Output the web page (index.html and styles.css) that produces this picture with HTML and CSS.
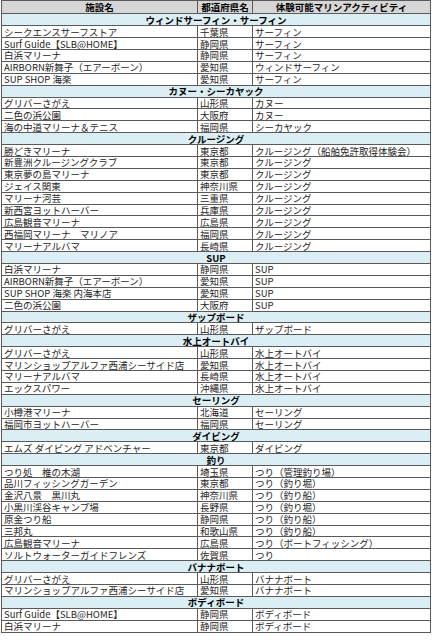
FILE: index.html
```html
<!DOCTYPE html>
<html lang="ja">
<head>
<meta charset="utf-8">
<link rel="stylesheet" href="styles.css">
</head>
<body>
<table class="list">
<colgroup><col class="c1"><col class="c2"><col class="c3"></colgroup>
<thead>
<tr class="head"><th>施設名</th><th>都道府県名</th><th>体験可能マリンアクティビティ</th></tr>
</thead>
<tbody>
<tr class="sec"><td colspan="3">ウィンドサーフィン・サーフィン</td></tr>
<tr><td>シークエンスサーフストア</td><td>千葉県</td><td>サーフィン</td></tr>
<tr><td>Surf Guide【SLB@HOME】</td><td>静岡県</td><td>サーフィン</td></tr>
<tr><td>白浜マリーナ</td><td>静岡県</td><td>サーフィン</td></tr>
<tr><td>AIRBORN新舞子（エアーボーン）</td><td>愛知県</td><td>ウィンドサーフィン</td></tr>
<tr><td>SUP SHOP 海楽</td><td>愛知県</td><td>サーフィン</td></tr>
<tr class="sec"><td colspan="3">カヌー・シーカヤック</td></tr>
<tr><td>グリバーさがえ</td><td>山形県</td><td>カヌー</td></tr>
<tr><td>二色の浜公園</td><td>大阪府</td><td>カヌー</td></tr>
<tr><td>海の中道マリーナ＆テニス</td><td>福岡県</td><td>シーカヤック</td></tr>
<tr class="sec"><td colspan="3">クルージング</td></tr>
<tr><td>勝どきマリーナ</td><td>東京都</td><td>クルージング（船舶免許取得体験会）</td></tr>
<tr><td>新豊洲クルージングクラブ</td><td>東京都</td><td>クルージング</td></tr>
<tr><td>東京夢の島マリーナ</td><td>東京都</td><td>クルージング</td></tr>
<tr><td>ジェイス関東</td><td>神奈川県</td><td>クルージング</td></tr>
<tr><td>マリーナ河芸</td><td>三重県</td><td>クルージング</td></tr>
<tr><td>新西宮ヨットハーバー</td><td>兵庫県</td><td>クルージング</td></tr>
<tr><td>広島観音マリーナ</td><td>広島県</td><td>クルージング</td></tr>
<tr><td>西福岡マリーナ　マリノア</td><td>福岡県</td><td>クルージング</td></tr>
<tr><td>マリーナアルバマ</td><td>長崎県</td><td>クルージング</td></tr>
<tr class="sec"><td colspan="3">SUP</td></tr>
<tr><td>白浜マリーナ</td><td>静岡県</td><td>SUP</td></tr>
<tr><td>AIRBORN新舞子（エアーボーン）</td><td>愛知県</td><td>SUP</td></tr>
<tr><td>SUP SHOP 海楽 内海本店</td><td>愛知県</td><td>SUP</td></tr>
<tr><td>二色の浜公園</td><td>大阪府</td><td>SUP</td></tr>
<tr class="sec"><td colspan="3">ザップボード</td></tr>
<tr><td>グリバーさがえ</td><td>山形県</td><td>ザップボード</td></tr>
<tr class="sec"><td colspan="3">水上オートバイ</td></tr>
<tr><td>グリバーさがえ</td><td>山形県</td><td>水上オートバイ</td></tr>
<tr><td>マリンショップアルファ西浦シーサイド店</td><td>愛知県</td><td>水上オートバイ</td></tr>
<tr><td>マリーナアルバマ</td><td>長崎県</td><td>水上オートバイ</td></tr>
<tr><td>エックスパワー</td><td>沖縄県</td><td>水上オートバイ</td></tr>
<tr class="sec"><td colspan="3">セーリング</td></tr>
<tr><td>小樽港マリーナ</td><td>北海道</td><td>セーリング</td></tr>
<tr><td>福岡市ヨットハーバー</td><td>福岡県</td><td>セーリング</td></tr>
<tr class="sec"><td colspan="3">ダイビング</td></tr>
<tr><td>エムズ ダイビング アドベンチャー</td><td>東京都</td><td>ダイビング</td></tr>
<tr class="sec"><td colspan="3">釣り</td></tr>
<tr><td>つり処　椎の木湖</td><td>埼玉県</td><td>つり（管理釣り場）</td></tr>
<tr><td>品川フィッシングガーデン</td><td>東京都</td><td>つり（釣り堀）</td></tr>
<tr><td>金沢八景　黒川丸</td><td>神奈川県</td><td>つり（釣り船）</td></tr>
<tr><td>小黒川渓谷キャンプ場</td><td>長野県</td><td>つり（釣り堀）</td></tr>
<tr><td>原金つり船</td><td>静岡県</td><td>つり（釣り船）</td></tr>
<tr><td>三邦丸</td><td>和歌山県</td><td>つり（釣り船）</td></tr>
<tr><td>広島観音マリーナ</td><td>広島県</td><td>つり（ボートフィッシング）</td></tr>
<tr><td>ソルトウォーターガイドフレンズ</td><td>佐賀県</td><td>つり</td></tr>
<tr class="sec"><td colspan="3">バナナボート</td></tr>
<tr><td>グリバーさがえ</td><td>山形県</td><td>バナナボート</td></tr>
<tr><td>マリンショップアルファ西浦シーサイド店</td><td>愛知県</td><td>バナナボート</td></tr>
<tr class="sec"><td colspan="3">ボディボード</td></tr>
<tr><td>Surf Guide【SLB@HOME】</td><td>静岡県</td><td>ボディボード</td></tr>
<tr><td>白浜マリーナ</td><td>静岡県</td><td>ボディボード</td></tr>
</tbody>
</table>
</body>
</html>
```
FILE: styles.css
```css
html, body {
  margin: 0;
  padding: 0;
  background: #ffffff;
}
body {
  padding: 0 0 0 1px;
  font-family: "Noto Sans CJK JP", "Noto Sans", sans-serif;
  font-size: 9.5px;
  color: #262626;
}
.list {
  border-collapse: collapse;
  table-layout: fixed;
  width: 429px;
}
.c1 { width: 196px; }
.c2 { width: 55px; }
.c3 { width: 178px; }
.list th, .list td {
  border: 1px solid #5a5a5a;
  padding: 0 0 0 2px;
  height: 10.9px;
  line-height: 10px;
  white-space: nowrap;
  overflow: hidden;
  text-align: left;
  vertical-align: middle;
}
.head th {
  height: 12.3px;
  background: #d6d6d6;
  color: #000;
  font-weight: bold;
  text-align: center;
  padding: 0;
}
.sec td {
  background: #daeef3;
  color: #000;
  font-weight: bold;
  text-align: center;
  padding: 0;
}
```
